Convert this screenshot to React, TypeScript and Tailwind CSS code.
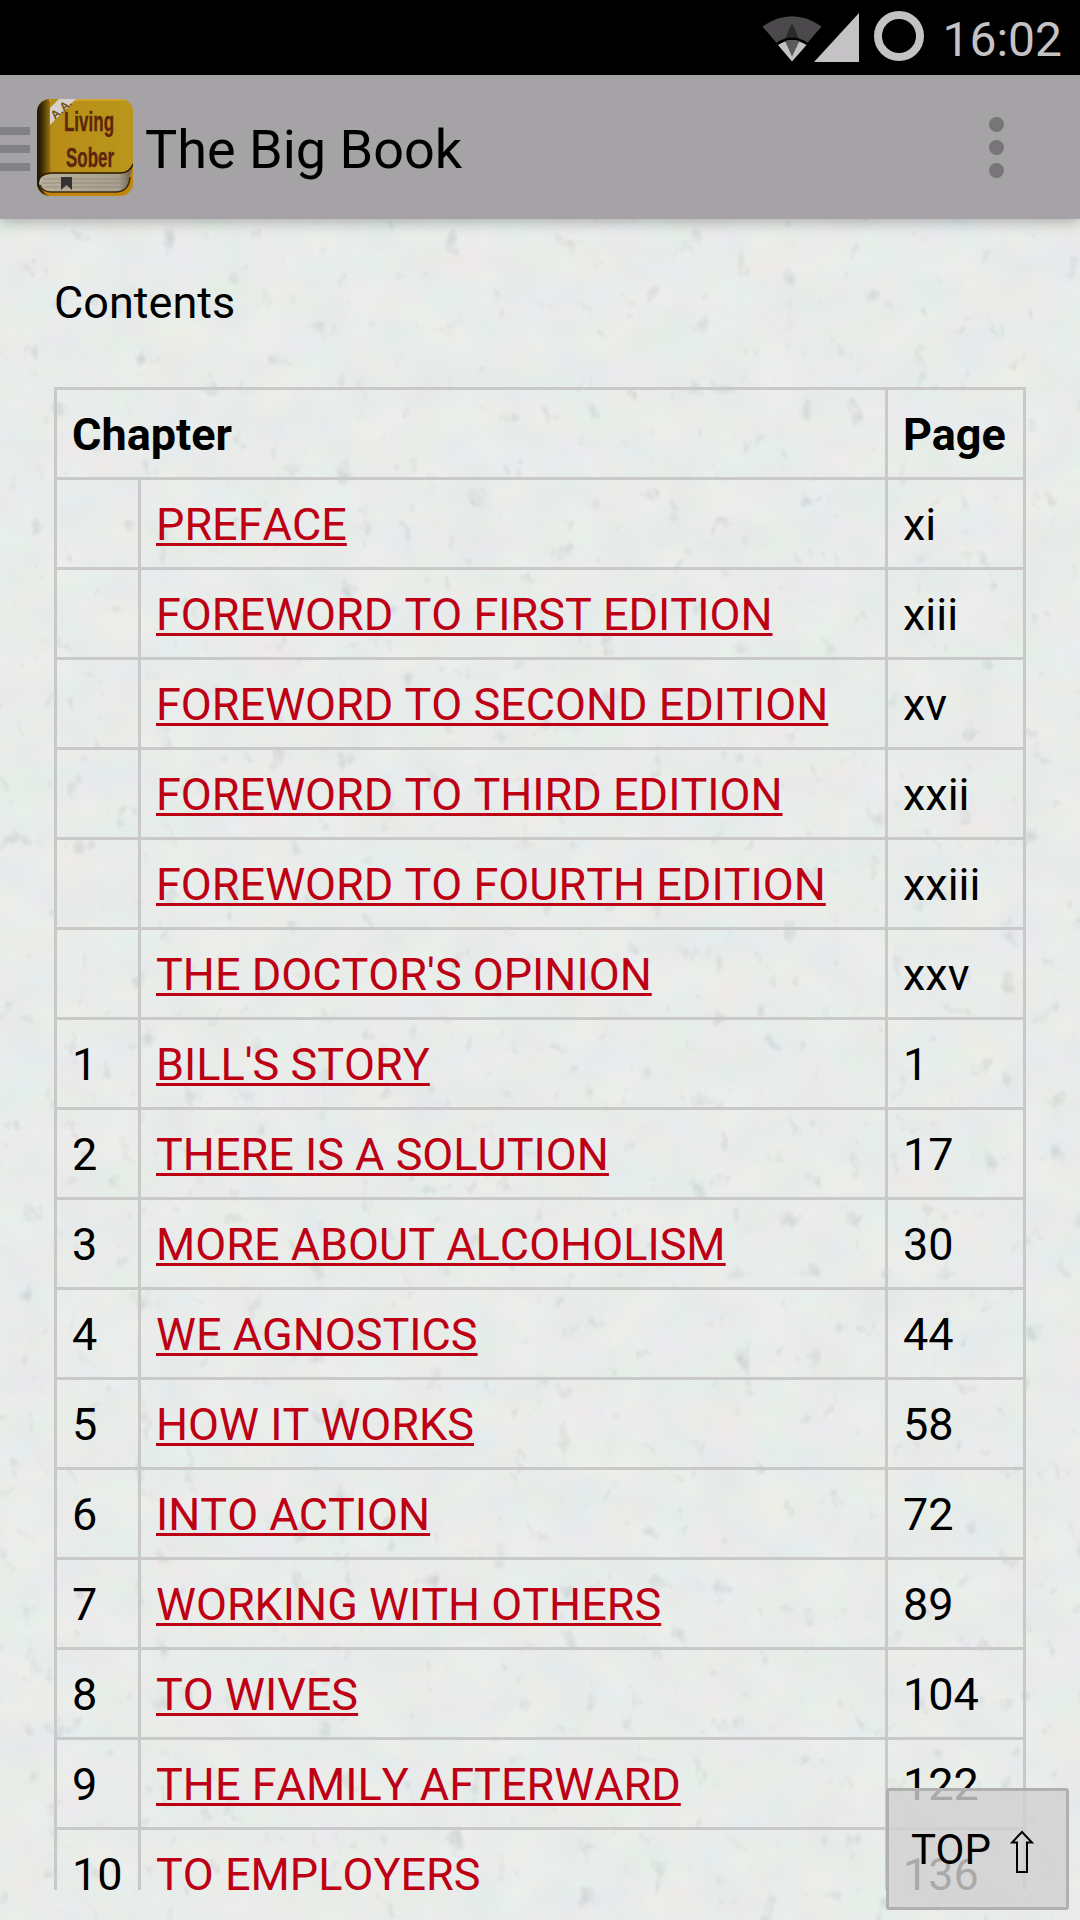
import React from "react";

const chapters = [
  { no: "", title: "PREFACE", page: "xi" },
  { no: "", title: "FOREWORD TO FIRST EDITION", page: "xiii" },
  { no: "", title: "FOREWORD TO SECOND EDITION", page: "xv" },
  { no: "", title: "FOREWORD TO THIRD EDITION", page: "xxii" },
  { no: "", title: "FOREWORD TO FOURTH EDITION", page: "xxiii" },
  { no: "", title: "THE DOCTOR'S OPINION", page: "xxv" },
  { no: "1", title: "BILL'S STORY", page: "1" },
  { no: "2", title: "THERE IS A SOLUTION", page: "17" },
  { no: "3", title: "MORE ABOUT ALCOHOLISM", page: "30" },
  { no: "4", title: "WE AGNOSTICS", page: "44" },
  { no: "5", title: "HOW IT WORKS", page: "58" },
  { no: "6", title: "INTO ACTION", page: "72" },
  { no: "7", title: "WORKING WITH OTHERS", page: "89" },
  { no: "8", title: "TO WIVES", page: "104" },
  { no: "9", title: "THE FAMILY AFTERWARD", page: "122" },
  { no: "10", title: "TO EMPLOYERS", page: "136" },
];

const StatusBar = () => (
  <div className="h-[75px] shrink-0 bg-black flex items-center justify-end pr-[18px]">
    <svg width="60" height="48" viewBox="0 0 60 48" className="mr-[-8px]">
      <path d="M0.5 12.5Q30-8 59.5 12.5L30 47Z" fill="#4b494b" />
      <path d="M30 9L38 27H22Z" fill="#2b292b" />
      <path d="M14 29Q30 18 46 29L30 48Z" fill="#000" />
      <path d="M16 31Q30 21.500 44.500 31L30 47.500Z" fill="#c5c2c5" />
      <path d="M23 27Q30 25 37.500 27L30 42.500Z" fill="#5b595b" />
    </svg>
    <svg width="45" height="49" viewBox="0 0 45 49" className="mr-[15px]">
      <path d="M45 0V49H0Z" fill="#c5c2c5" />
    </svg>
    <div className="size-[50px] mt-[-3px] rounded-full border-8 border-[#c5c2c5] mr-[18px]" />
    <span className="text-[48px] leading-[56px] mt-1 text-[#c5c2c5]">16:02</span>
  </div>
);

const BookIcon = () => (
  <svg width="96" height="97" viewBox="0 0 96 97">
    <defs>
      <linearGradient id="cover" x1="0" x2="1">
        <stop offset="0" stopColor="#191307" />
        <stop offset="0.05" stopColor="#3c2b06" />
        <stop offset="0.12" stopColor="#88630f" />
        <stop offset="0.15" stopColor="#b88d17" />
        <stop offset="1" stopColor="#b9961b" />
      </linearGradient>
      <linearGradient id="pages" x1="0" x2="1">
        <stop offset="0" stopColor="#b9b09b" />
        <stop offset="0.85" stopColor="#a79f8f" />
        <stop offset="1" stopColor="#5f5947" />
      </linearGradient>
      <clipPath id="shape">
        <rect width="96" height="97" rx="13" />
      </clipPath>
    </defs>
    <g clipPath="url(#shape)">
      <rect width="96" height="97" fill="#c3860d" />
      <path d="M0 0H96V62Q94 74 82 74H12Q4 77 4 84Q3 92 12 97H0Z" fill="url(#cover)" />
      <path d="M12 1H96" stroke="#d4a32f" strokeWidth="2" />
      <path d="M13 0H39L13 26Z" fill="#d5d0cb" />
      <path d="M13 0H22L13 9Z" fill="#b88d17" />
      <path d="M96 66Q93 75 83 75H14Q2 76 2 84Q3 93 14 93H80Q92 91 92 80Z" fill="url(#pages)" />
      <path d="M96 65Q93 74 83 74H14Q2 75 1 82" fill="none" stroke="#241b0c" strokeWidth="1.500" />
      <path d="M3 86Q6 93 14 93H78Q92 93 93 78" fill="none" stroke="#3c2b10" strokeWidth="1.500" />
      <path d="M6 80H88M5 84H89M7 88H86" stroke="#8f8778" strokeWidth="0.800" />
      <path d="M24 78H35V91L29.500 86L24 91Z" fill="#333234" />
    </g>
    <text transform="translate(18 21) rotate(-42)" fontSize="12" fontWeight="700" fill="#705212" fontFamily="Liberation Sans, sans-serif">A.A.</text>
    <g fill="#5c260c" stroke="#5c260c" strokeWidth="0.4" fontWeight="700" fontSize="27" fontFamily="Liberation Sans, sans-serif">
      <text x="27" y="32" textLength="50" lengthAdjust="spacingAndGlyphs">Living</text>
      <text x="29" y="67.500" textLength="48" lengthAdjust="spacingAndGlyphs">Sober</text>
    </g>
  </svg>
);

const AppBar = () => (
  <div className="relative h-36 shrink-0 bg-[#a5a3a5] flex items-center shadow-[0_2px_14px_rgba(0,0,0,0.3)]">
    <div className="w-[30px] flex flex-col gap-[10px] mr-[7px] mt-1">
      <div className="h-2 bg-[#808284]" />
      <div className="h-2 bg-[#808284]" />
      <div className="h-2 bg-[#808284]" />
    </div>
    <BookIcon />
    <h1 className="ml-3 mt-[5px] text-[54px] leading-[64px] text-black">The Big Book</h1>
    <button className="ml-auto mr-[76px] flex flex-col gap-2">
      <span className="size-[15px] rounded-full bg-[#777577]" />
      <span className="size-[15px] rounded-full bg-[#777577]" />
      <span className="size-[15px] rounded-full bg-[#777577]" />
    </button>
  </div>
);

// Faint mottled paper behind the page content
const PaperTexture = () => (
  <svg className="absolute inset-0 size-full">
    <filter id="grain" x="0" y="0" width="100%" height="100%" colorInterpolationFilters="sRGB">
      <feTurbulence type="fractalNoise" baseFrequency="0.02 0.025" numOctaves="5" seed="8" />
      <feColorMatrix values="0.06 0 0 0 0.882  0 0.04 0 0 0.905  0 0 0.05 0 0.892  0 0 0 0 1" />
    </filter>
    <filter id="flecks" x="0" y="0" width="100%" height="100%" colorInterpolationFilters="sRGB">
      <feTurbulence type="fractalNoise" baseFrequency="0.045 0.035" numOctaves="3" seed="23" />
      <feColorMatrix values="0 0 0 0 0.74  0 0 0 0 0.77  0 0 0 0 0.77  2 0 0 0 -1.36" />
    </filter>
    <rect width="100%" height="100%" filter="url(#grain)" />
    <rect width="100%" height="100%" filter="url(#flecks)" />
  </svg>
);

const App = () => {
  return (
    <div className="relative w-[1080px] h-[1920px] overflow-hidden flex flex-col bg-[#e9ecea] font-[Roboto,sans-serif] text-black">
      <PaperTexture />
      <div className="relative z-10">
        <StatusBar />
        <AppBar />
      </div>

      <main className="relative h-[1671px] overflow-hidden px-[54px] pt-[57px] text-[45px] leading-[53px]">
        <p>Contents</p>
        <table className="mt-[58px] w-[972px] table-fixed border-separate border-spacing-0 border-l-[3px] border-t-[3px] border-[#c8c9c8]">
          <colgroup>
            <col className="w-[84px]" />
            <col className="w-[747px]" />
            <col className="w-[138px]" />
          </colgroup>
          <thead>
            <tr className="h-[90px] text-left">
              <th colSpan={2} className="border-r-[3px] border-b-[3px] border-[#c8c9c8] p-0 pt-0.5 pl-[15px]">Chapter</th>
              <th className="border-r-[3px] border-b-[3px] border-[#c8c9c8] p-0 pt-0.5 pl-[15px]">Page</th>
            </tr>
          </thead>
          <tbody>
            {chapters.map((chapter) => (
              <tr key={chapter.title} className="h-[90px]">
                <td className="border-r-[3px] border-b-[3px] border-[#c8c9c8] p-0 pt-0.5 pl-[15px]">{chapter.no}</td>
                <td className="border-r-[3px] border-b-[3px] border-[#c8c9c8] p-0 pt-0.5 pl-[15px] whitespace-nowrap">
                  <a href="#" className="text-[#bd0014] underline decoration-[3px] underline-offset-[3px] [font-kerning:none]">
                    {chapter.title}
                  </a>
                </td>
                <td className="border-r-[3px] border-b-[3px] border-[#c8c9c8] p-0 pt-0.5 pl-[15px]">{chapter.page}</td>
              </tr>
            ))}
          </tbody>
        </table>
      </main>

      <button className="absolute z-10 left-[886px] top-[1788px] w-[183px] h-[122px] rounded-[3px] border-[3px] border-[#b0b0b0] bg-[#d1d0d1]/81 bg-clip-padding flex items-center pl-[22px] text-[42px] leading-[50px]">
        <span className="mt-0.5">TOP</span>
        <svg width="24" height="44" viewBox="0 0 24 44" className="ml-[19px] mt-1.5" fill="none" stroke="#000" strokeWidth="2">
          <path d="M12 2L22 12.500H17V42H7V12.500H2Z" />
        </svg>
      </button>
    </div>
  );
};

export default App;
